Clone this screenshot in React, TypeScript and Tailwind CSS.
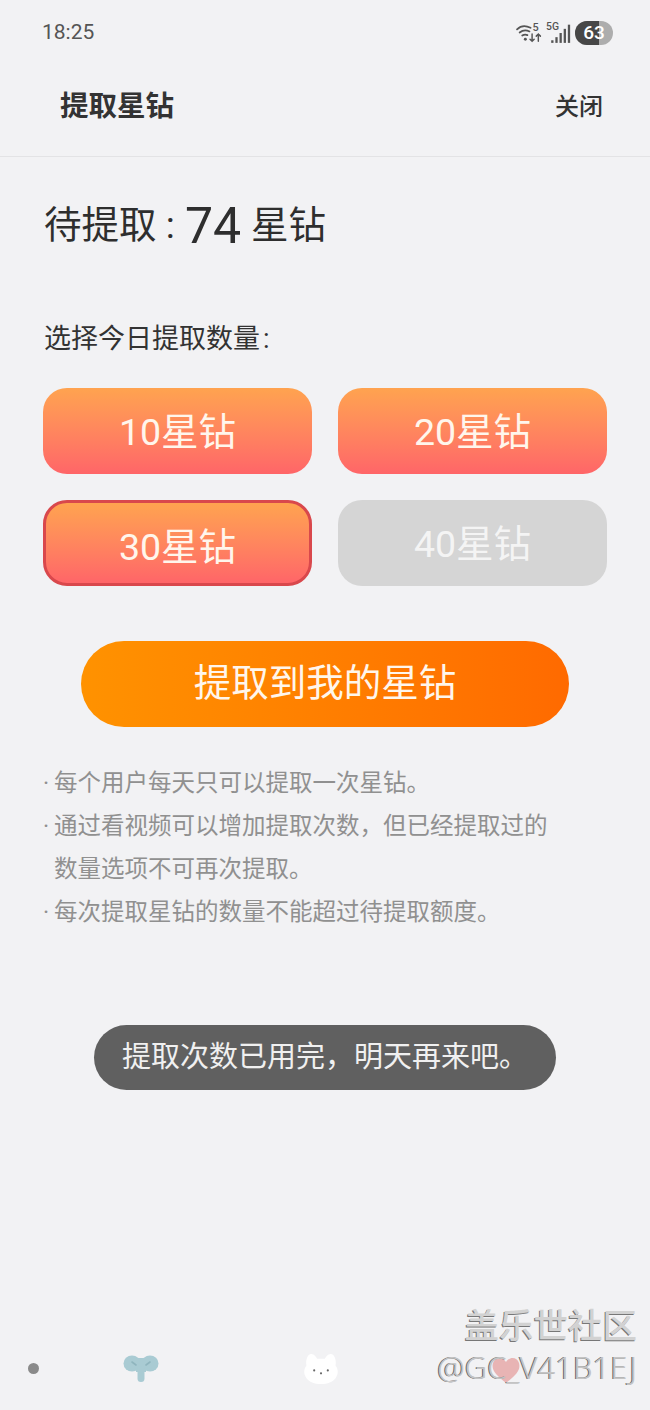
import React from 'react';

const font = { fontFamily: 'Roboto, "Noto Sans CJK SC", sans-serif' };

const StatusIcons = () => (
  <div className="flex items-center gap-[3px]">
    <svg width="27" height="24" viewBox="0 0 26 22" fill="none" stroke="#555" strokeLinecap="round">
      <path d="M1 7.5C4 4.5 9 3.5 14 6" strokeWidth="1.7" />
      <path d="M3.5 10.5C6 8.5 10 8 13 9.5" strokeWidth="1.7" />
      <path d="M6 13.5C7.5 12.5 9.5 12.3 11 13" strokeWidth="1.7" />
      <circle cx="9" cy="17" r="1.4" fill="#555" stroke="none" />
      <path d="M15.5 12v7M13.5 17l2 2 2-2M21.5 19v-7M19.5 14l2-2 2 2" strokeWidth="1.4" />
      <text x="16" y="9" fontSize="10.5" fill="#555" stroke="none" fontWeight="500">5</text>
    </svg>
    <svg width="26" height="24" viewBox="0 0 25 22" fill="#555">
      <text x="0" y="8" fontSize="10" fontWeight="500">5G</text>
      <rect x="5" y="18" width="2.2" height="2.5" />
      <rect x="9" y="15" width="2.2" height="5.5" />
      <rect x="13" y="11" width="2.2" height="9.5" />
      <rect x="17" y="7" width="2.2" height="13.5" />
      <rect x="21" y="3" width="2.2" height="17.5" />
    </svg>
    <div className="relative flex h-[24px] w-[38px] items-center justify-center overflow-hidden rounded-full bg-[#adadad]">
      <div className="absolute inset-y-0 left-0 w-[24px] bg-[#474747]" />
      <span className="relative text-[19px] font-medium leading-none text-white">63</span>
    </div>
  </div>
);

const AmountButton = ({ label, selected, disabled }: { label: string; selected?: boolean; disabled?: boolean }) => (
  <div
    className={
      disabled
        ? 'flex h-[86px] items-center justify-center rounded-[24px] bg-[#d5d5d5] pt-[3px] text-[37.5px] leading-none text-[#f4f4f4]'
        : selected
          ? 'flex h-[86px] items-center justify-center rounded-[24px] border-[3px] border-[#d9484c] bg-gradient-to-b from-[#ffa34f] to-[#ff6568] pt-[9px] text-[37.5px] leading-none text-[#fff6ec]'
          : 'flex h-[86px] items-center justify-center rounded-[24px] bg-gradient-to-b from-[#ffa34f] to-[#ff6568] pt-[3px] text-[37.5px] leading-none text-[#fff6ec]'
    }
  >
    {label}
  </div>
);

const notes = [
  { text: '每个用户每天只可以提取一次星钻。', dot: true },
  { text: '通过看视频可以增加提取次数，但已经提取过的', dot: true },
  { text: '数量选项不可再次提取。', dot: false },
  { text: '每次提取星钻的数量不能超过待提取额度。', dot: true },
];

export default function App() {
  return (
    <div className="relative flex h-[1410px] w-[650px] flex-col overflow-hidden bg-[#f2f2f4]" style={font}>
      {/* status bar */}
      <div className="flex h-[62px] items-center justify-between pl-[42px] pr-[37px] pt-[3px]">
        <span className="text-[21px] leading-none text-[#555]">18:25</span>
        <StatusIcons />
      </div>

      {/* header */}
      <div className="flex h-[95px] items-center justify-between border-b border-[#e3e3e5] pl-[60px] pr-[47px] pb-[4px]">
        <span className="text-[28.5px] font-bold leading-none text-[#333]">提取星钻</span>
        <span className="text-[24px] font-medium leading-none text-[#333]">关闭</span>
      </div>

      <div className="px-[43px]">
        <div className="mt-[42px] flex h-[54px] items-center pl-[1px] text-[#2e2e2e]">
          <span className="text-[37.5px] leading-none">待提取 :</span>
          <span className="ml-[10px] text-[50px] leading-none">74</span>
          <span className="ml-[10px] text-[37.5px] leading-none">星钻</span>
        </div>

        <div className="mt-[68px] pl-[1px] text-[27px] leading-[36px] text-[#333]">
          选择今日提取数量<span className="ml-[3px]">:</span>
        </div>

        <div className="mt-[31px] grid grid-cols-2 gap-x-[26px] gap-y-[26px]">
          <AmountButton label="10星钻" />
          <AmountButton label="20星钻" />
          <AmountButton label="30星钻" selected />
          <AmountButton label="40星钻" disabled />
        </div>

        <div className="mx-[38px] mt-[55px] flex h-[86px] items-center justify-center rounded-full bg-gradient-to-r from-[#ff9200] to-[#ff6a00] text-[37.5px] leading-none text-[#fff6ec]">
          提取到我的星钻
        </div>

        <div className="mt-[35px] text-[23.5px] leading-[43px] text-[#909090]">
          {notes.map((n) => (
            <div key={n.text} className="flex">
              <span className="w-[11px] shrink-0">{n.dot ? '·' : ''}</span>
              <span>{n.text}</span>
            </div>
          ))}
        </div>
      </div>

      {/* bottom icons */}
      <div className="mt-auto mb-[24px] flex h-[36px] items-center pl-[28px]">
        <div className="h-[11px] w-[11px] rounded-full bg-[#8a8a8a]" />
        <svg className="ml-[84px]" width="36" height="28" viewBox="0 0 36 28">
          <ellipse cx="9" cy="9.5" rx="8.5" ry="8" fill="#a9cbd3" />
          <ellipse cx="27" cy="9.5" rx="8.5" ry="8" fill="#a9cbd3" />
          <rect x="13" y="4" width="10" height="14" fill="#a9cbd3" />
          <rect x="14.5" y="12" width="7" height="16" rx="3.5" fill="#a9cbd3" />
          <path d="M9 8l4 3M27 8l-4 3" stroke="#8fb5be" strokeWidth="1.6" strokeLinecap="round" />
        </svg>
        <svg className="ml-[143px]" width="38" height="33" viewBox="0 0 38 34">
          <path d="M4 14C3 8 5 2 9 2c3 0 5 3 6 5h8c1-2 3-5 6-5 4 0 6 6 5 12 3 4 3 9 0 13-3 4-8 6-15 6S7 31 4 27c-3-4-3-9 0-13z" fill="#fff" />
          <circle cx="12" cy="19" r="1.1" fill="#666" />
          <circle cx="19" cy="22" r="1.1" fill="#666" />
          <circle cx="26" cy="19" r="1.1" fill="#666" />
        </svg>
      </div>

      {/* toast */}
      <div className="absolute left-[94px] top-[1025px] flex h-[65px] w-[462px] items-center justify-center rounded-full bg-[#606060] text-[29px] leading-none text-[#f0f0f0]">
        提取次数已用完，明天再来吧。
      </div>

      {/* heart under the watermark */}
      <svg className="absolute left-[490px] top-[1354px]" width="32" height="30" viewBox="0 0 32 30">
        <path d="M16 29C6 21 1 16 3 9c2-6 9-7 13-1 4-6 11-5 13 1 2 7-3 12-13 20z" fill="#e8b4b4" />
      </svg>

      {/* watermark */}
      <div className="absolute right-[13px] top-[1303px] text-right" style={{ fontFamily: '"Noto Sans", "Noto Sans CJK SC", sans-serif' }}>
        <div className="text-[34.5px] font-medium leading-[44px] text-[#d2d2d2] [text-shadow:-1px_1px_0_#777]">盖乐世社区</div>
        <div className="mt-[1px] text-[31px] font-light leading-[38px] text-[#c4c4c4] [text-shadow:-1px_0_0_#666]">@GC_V41B1EJ</div>
      </div>
    </div>
  );
}
